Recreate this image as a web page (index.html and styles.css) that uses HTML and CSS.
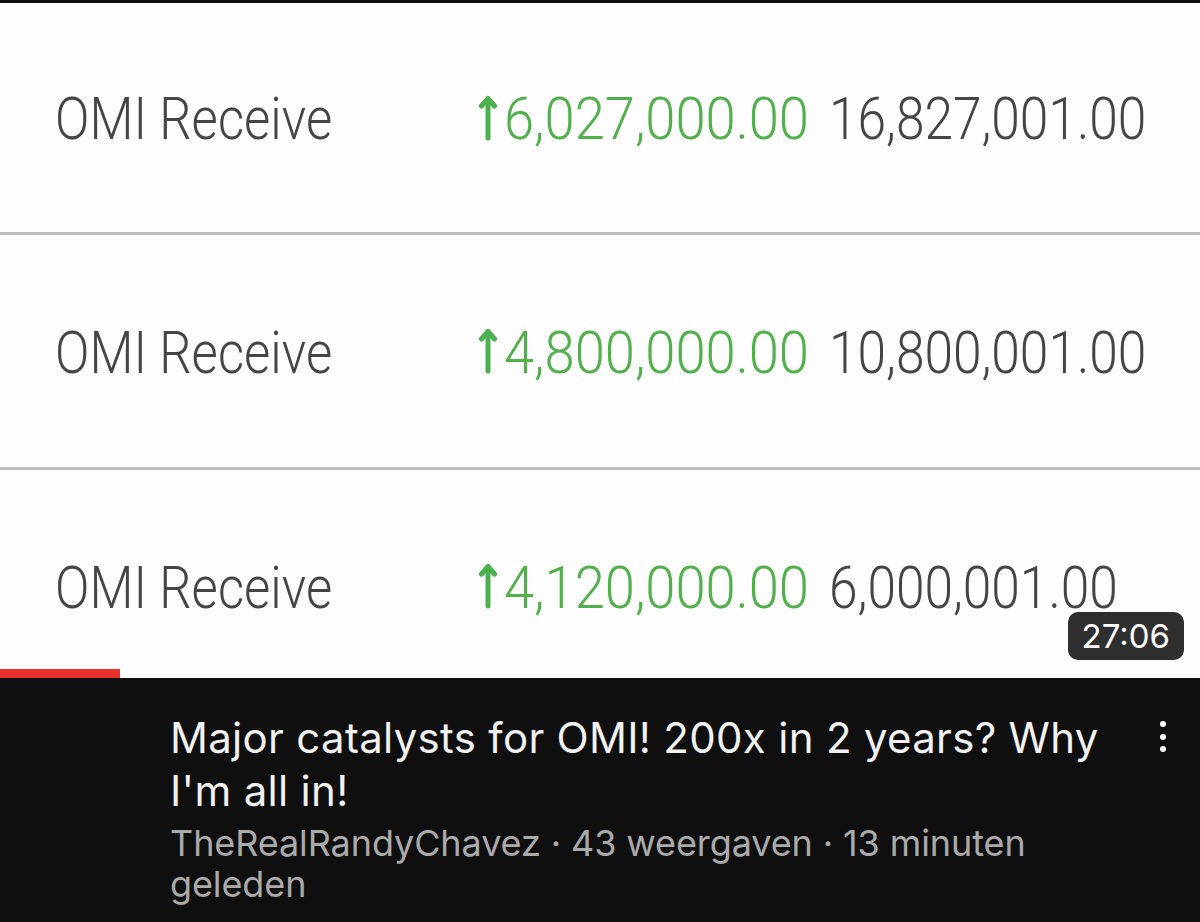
FILE: index.html
```html
<!DOCTYPE html>
<html lang="en">
<head>
    <meta charset="UTF-8">
    <meta name="viewport" content="width=device-width, initial-scale=1.0">
    <title>Major catalysts for OMI!</title>
    <link rel="stylesheet" href="styles.css">
</head>
<body>
    <div class="thumb">
        <div class="tx-row">
            <span class="tx-label">OMI Receive</span>
            <span class="tx-amount">
                <svg class="arrow" viewBox="0 0 18 48"><path d="M9 45V6M2.5 13L9 5.5l6.5 7.5" fill="none" stroke="#4caf50" stroke-width="5" stroke-linecap="round" stroke-linejoin="round"/></svg>
                <span class="num">6,027,000.00</span>
            </span>
            <span class="tx-balance">16,827,001.00</span>
        </div>
        <div class="tx-row">
            <span class="tx-label">OMI Receive</span>
            <span class="tx-amount">
                <svg class="arrow" viewBox="0 0 18 48"><path d="M9 45V6M2.5 13L9 5.5l6.5 7.5" fill="none" stroke="#4caf50" stroke-width="5" stroke-linecap="round" stroke-linejoin="round"/></svg>
                <span class="num">4,800,000.00</span>
            </span>
            <span class="tx-balance">10,800,001.00</span>
        </div>
        <div class="tx-row">
            <span class="tx-label">OMI Receive</span>
            <span class="tx-amount">
                <svg class="arrow" viewBox="0 0 18 48"><path d="M9 45V6M2.5 13L9 5.5l6.5 7.5" fill="none" stroke="#4caf50" stroke-width="5" stroke-linecap="round" stroke-linejoin="round"/></svg>
                <span class="num">4,120,000.00</span>
            </span>
            <span class="tx-balance">6,000,001.00</span>
        </div>
        <span class="duration">27:06</span>
        <div class="progress"></div>
    </div>
    <div class="info">
        <div class="info-text">
            <h1 class="title">Major catalysts for OMI! 200x in 2 years? Why I'm all in!</h1>
            <p class="meta">TheRealRandyChavez · 43 weergaven · 13 minuten geleden</p>
        </div>
        <div class="menu">
            <span></span><span></span><span></span>
        </div>
    </div>
</body>
</html>
```

FILE: styles.css
```css
* {
    margin: 0;
    padding: 0;
    box-sizing: border-box;
}
body {
    width: 1200px;
    height: 922px;
    background: #0f0f0f;
    overflow: hidden;
}
.thumb {
    position: relative;
    height: 678px;
    background: #fdfdfd;
    border-top: 3px solid #111;
    overflow: hidden;
}
.tx-row {
    height: 235px;
    display: grid;
    grid-template-columns: 424px 350px auto;
    align-items: center;
    padding-left: 55px;
    padding-top: 2px;
    border-bottom: 3px solid #bdbdbd;
    font-family: Roboto, "Noto Sans", sans-serif;
    font-weight: 300;
    font-size: 60px;
    color: #454545;
    white-space: nowrap;
}
.tx-row:first-child {
    height: 232px;
}
.tx-label {
    display: inline-block;
    transform: scaleX(0.847);
    transform-origin: left center;
}
.tx-amount {
    display: flex;
    align-items: center;
    gap: 7px;
    color: #52b04c;
}
.num {
    display: inline-block;
    transform: scaleX(0.905);
    transform-origin: left center;
}
.tx-balance {
    display: inline-block;
    transform: scaleX(0.857);
    transform-origin: left center;
}
.arrow {
    flex-shrink: 0;
    width: 18px;
    height: 48px;
    margin-top: -4px;
}
.duration {
    position: absolute;
    right: 16px;
    bottom: 18px;
    padding: 2px 14px;
    border-radius: 10px;
    background: #2f2f2f;
    color: #fff;
    font-family: Inter, "Noto Sans", sans-serif;
    font-size: 33px;
    line-height: 44px;
}
.progress {
    position: absolute;
    left: 0;
    bottom: 0;
    width: 120px;
    height: 9px;
    background: #e8302b;
}
.info {
    display: flex;
    align-items: flex-start;
    padding: 33px 0 0 170px;
    font-family: Inter, "Noto Sans", sans-serif;
}
.info-text {
    width: 950px;
}
.title {
    font-size: 42px;
    font-weight: 400;
    line-height: 53px;
    letter-spacing: 0.3px;
    color: #f1f1f1;
}
.meta {
    margin-top: 6px;
    font-size: 36px;
    line-height: 41px;
    letter-spacing: -0.1px;
    color: #aaa;
}
.menu {
    display: flex;
    flex-direction: column;
    gap: 6.5px;
    margin: 10px 0 0 40px;
}
.menu span {
    width: 6px;
    height: 6px;
    border-radius: 50%;
    background: #fff;
}
```
